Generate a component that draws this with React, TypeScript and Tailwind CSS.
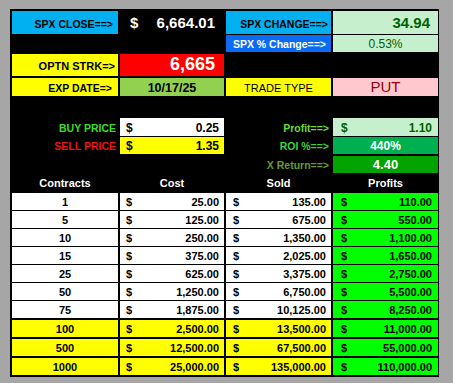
import React from 'react';

const COLS = 'grid grid-cols-[106px_104px_105px_105px] gap-x-[2px]';

const contracts = [1, 5, 10, 15, 25, 50, 75, 100, 500, 1000];

function money(n: number) {
  return n.toLocaleString('en-US', { minimumFractionDigits: 2, maximumFractionDigits: 2 });
}

function Dollar({ value, className, pl, pr }: { value: string; className: string; pl: string; pr: string }) {
  return (
    <div className={`flex items-end justify-between pb-[2px] ${pl} ${pr} ${className}`}>
      <span>$</span>
      <span>{value}</span>
    </div>
  );
}

export default function App() {
  return (
    <div className="w-[453px] h-[383px] bg-[#a6a6a6] pt-[9px] pl-[10px] font-['Liberation_Sans',Arial,sans-serif] leading-none">
      <div className="w-[429px] h-[368px] bg-black pl-[2px] pt-[2px] flex flex-col">
        {/* row 1 */}
        <div className={`${COLS} h-[23px]`}>
          <div className="bg-[#00b0f0] flex items-end justify-end pr-[5px] pb-[5px] text-[10.5px] font-bold text-black">SPX CLOSE==&gt;</div>
          <div className="flex items-end justify-between pl-[10px] pr-[9px] pb-[4px] text-[15px] font-bold text-white">
            <span>$</span>
            <span>6,664.01</span>
          </div>
          <div className="bg-[#00b0f0] flex items-end justify-end pr-[3px] pb-[5px] text-[10.5px] font-bold text-black">SPX CHANGE==&gt;</div>
          <div className="bg-[#c6efce] flex items-end justify-end pr-[8px] pb-[4px] text-[15px] font-bold text-[#006100]">34.94</div>
        </div>
        {/* row 2 */}
        <div className={`${COLS} h-[17px] mt-[1px]`}>
          <div />
          <div />
          <div className="bg-[#0b6cf3] flex items-end justify-end pr-[5px] pb-[3px] text-[10.5px] font-bold text-white">SPX % Change==&gt;</div>
          <div className="bg-[#c6efce] flex items-end justify-center pb-[2px] text-[12px] text-[#006100]">0.53%</div>
        </div>
        {/* row 3 */}
        <div className={`${COLS} h-[22px] mt-[2px]`}>
          <div className="bg-[#ffff00] flex items-end justify-end pr-[3px] pb-[4px] text-[11px] font-bold text-black">OPTN STRK=&gt;</div>
          <div className="bg-[#ff0000] flex items-end justify-end pr-[9px] pb-[3px] text-[18px] font-bold text-white">6,665</div>
          <div />
          <div />
        </div>
        {/* row 4 */}
        <div className={`${COLS} h-[18px] mt-[2px]`}>
          <div className="bg-[#ffff00] flex items-end justify-end pr-[6px] pb-[3px] text-[10.5px] font-bold text-black">EXP DATE=&gt;</div>
          <div className="bg-[#92d050] flex items-end justify-center pb-[2px] text-[12.5px] font-bold text-black">10/17/25</div>
          <div className="bg-[#ffff00] flex items-end justify-center pb-[2px] text-[11px] text-black">TRADE TYPE</div>
          <div className="bg-[#ffc7ce] flex items-end justify-center pb-[2px] text-[15px] text-[#9c0006]">PUT</div>
        </div>
        {/* row 5 */}
        <div className={`${COLS} h-[18px] mt-[22px]`}>
          <div className="flex items-end justify-end pr-[2px] pb-[3px] text-[10.5px] font-bold text-[#3fdc2a]">BUY PRICE</div>
          <Dollar value="0.25" className="bg-white text-[12px] font-bold text-black" pl="pl-[6px]" pr="pr-[5px]" />
          <div className="flex items-end justify-end pr-[2px] pb-[3px] text-[10.5px] font-bold text-[#66dd33]">Profit==&gt;</div>
          <Dollar value="1.10" className="bg-[#c6efce] text-[12px] font-bold text-[#006100]" pl="pl-[8px]" pr="pr-[6px]" />
        </div>
        {/* row 6 */}
        <div className={`${COLS} h-[17px] mt-[1px]`}>
          <div className="flex items-end justify-end pr-[2px] pb-[3px] text-[10.5px] font-bold text-[#ee1111]">SELL PRICE</div>
          <Dollar value="1.35" className="bg-[#ffff00] text-[12px] font-bold text-black" pl="pl-[6px]" pr="pr-[5px]" />
          <div className="flex items-end justify-end pr-[2px] pb-[3px] text-[10.5px] font-bold text-[#3ad23a]">ROI %==&gt;</div>
          <div className="bg-[#00b050] flex items-end justify-center pb-[2px] text-[12px] font-bold text-white">440%</div>
        </div>
        {/* row 7 */}
        <div className={`${COLS} h-[17px] mt-[2px]`}>
          <div />
          <div />
          <div className="flex items-end justify-end pr-[2px] pb-[3px] text-[10.5px] font-bold text-[#6a9a30]">X Return==&gt;</div>
          <div className="bg-[#00a300] flex items-end justify-center pb-[2px] text-[13px] font-bold text-white">4.40</div>
        </div>
        {/* header */}
        <div className={`${COLS} h-[20px] text-[11px] font-bold text-white`}>
          <div className="flex items-end justify-center pb-[4px]">Contracts</div>
          <div className="flex items-end justify-center pb-[4px]">Cost</div>
          <div className="flex items-end justify-center pb-[4px]">Sold</div>
          <div className="flex items-end justify-center pb-[4px]">Profits</div>
        </div>
        {/* table */}
        {contracts.map((c, i) => {
          const big = c >= 100;
          const bg = big ? 'bg-[#ffff00]' : 'bg-white';
          const gap = i === 0 ? '' : big ? 'mt-[2px]' : 'mt-[1px]';
          return (
            <div key={c} className={`${COLS} h-[17px] ${gap} text-[11px] font-bold text-black`}>
              <div className={`${bg} flex items-end justify-center pb-[2px]`}>{c}</div>
              <Dollar value={money(c * 25)} className={bg} pl="pl-[6px]" pr="pr-[5px]" />
              <Dollar value={money(c * 135)} className={bg} pl="pl-[7px]" pr="pr-[5px]" />
              <Dollar value={money(c * 110)} className="bg-[#00ff00]" pl="pl-[8px]" pr="pr-[6px]" />
            </div>
          );
        })}
      </div>
    </div>
  );
}
